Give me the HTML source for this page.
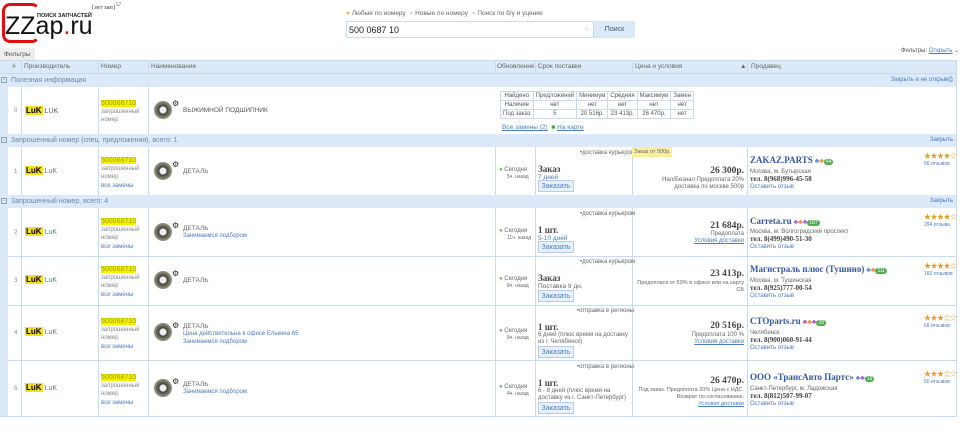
<!DOCTYPE html>
<html><head><meta charset="utf-8"><style>
*{margin:0;padding:0;box-sizing:border-box}
body{width:960px;height:442px;background:#fff;font-family:"Liberation Sans","Noto Sans CJK SC",sans-serif;color:#666;position:relative;overflow:hidden;font-size:7px}
.a{position:absolute;white-space:nowrap}
.hd{background:#dbe9f8;border-top:1px solid #c5d8ee;border-bottom:1px solid #c5d8ee}
.sec{background:#dbe9f8;color:#6a88aa;font-size:7px;padding:3px 0 0 11px}
.vl{position:absolute;width:1px;background:#c9dbef}
.hl{position:absolute;height:1px;background:#c9dbef;left:8px;width:949px}
.luk{display:inline-block;background:#f0e020;color:#000;font-weight:bold;font-size:8px;padding:0 1px;margin-right:2px}
.num{background:#f5f000;color:#a0a000;font-size:7px}
.lnk{color:#4a7cc0}
.btn{position:absolute;border:1px solid #b5cde8;background:#e8f1fb;color:#4a7cc0;font-size:7px;width:36px;height:12px;text-align:center;line-height:11px}
.pr{font-family:"Liberation Serif",serif;font-weight:bold;font-size:9.5px;color:#444}
.sn{font-family:"Liberation Serif",serif;font-weight:bold;font-size:9px;color:#3558a0}
.tel{font-family:"Liberation Serif",serif;font-weight:bold;font-size:7px;color:#444}
.st{color:#e0a020;font-size:7px;letter-spacing:-0.5px}
.ic{position:absolute;width:18px;height:18px;border-radius:50%;background:radial-gradient(circle,#eee 3px,#444 4px,#665 6px,#998 9px)}
.small{font-size:6px;color:#888}
</style></head><body>
<!-- logo -->
<div class="a" style="left:2px;top:3px;width:38px;height:40px;border:3px solid #e01010;border-radius:8px;border-right-color:transparent"></div>
<div class="a" style="left:5px;top:12px;font-size:25px;color:#111;font-family:'Liberation Sans',sans-serif">ZZap<span style="color:#e01010">.</span>ru</div>
<div class="a" style="left:37px;top:13px;font-size:5.5px;font-weight:bold;color:#222">ПОИСК ЗАПЧАСТЕЙ</div>
<div class="a" style="left:91px;top:3px;font-size:6.5px;color:#333;font-family:'Liberation Serif',serif">{зет зап}<sup style="font-size:5px">57</sup></div>
<!-- search -->
<div class="a" style="left:346px;top:10px;font-size:6.5px;color:#666"><span style="color:#e8b030">●</span> Любые по номеру &nbsp;<span style="color:#c8daf0">●</span> Новые по номеру &nbsp;<span style="color:#c8daf0">●</span> Поиск по б/у и уценке</div>
<div class="a" style="left:346px;top:21px;width:248px;height:17px;border:1px solid #c8daf0;font-size:9px;color:#222;padding:3px 0 0 2px">500 0687 10<span style="position:absolute;right:4px;top:4px;color:#9bd;font-size:7px">○</span></div>
<div class="a" style="left:594px;top:21px;width:41px;height:17px;background:#dbe9f8;font-size:7px;color:#456;text-align:center;line-height:17px">Поиск</div>
<div class="a" style="left:0;top:48px;width:35px;height:12px;background:#eee;font-size:6.5px;color:#555;padding:3px 0 0 4px">Фильтры</div>
<div class="a" style="left:901px;top:47px;font-size:6px;color:#555">Фильтры: <span class="lnk" style="text-decoration:underline">Открыть</span> ⌄</div>
<!-- table frame -->
<div class="a" style="left:0;top:60px;width:8px;height:356px;background:#dbe9f8"></div>
<div class="a hd" style="left:0;top:60px;width:957px;height:14px"></div>
<div class="a" style="left:8px;top:63px;font-size:6.5px;color:#666;width:949px">
<span class="a" style="left:4px">#</span><span class="a" style="left:16px">Производитель</span><span class="a" style="left:93px">Номер</span><span class="a" style="left:143px">Наименование</span><span class="a" style="left:489px">Обновление</span><span class="a" style="left:530px">Срок поставки</span><span class="a" style="left:627px">Цена и условия</span><span class="a" style="left:732px">▲</span><span class="a" style="left:743px">Продавец</span></div>
<div class="a sec" style="left:0;top:74px;width:957px;height:13px">Полезная информация<span class="a" style="right:4px;top:3px;color:#4a7cc0;font-size:6px">Закрыть и не открыв⎙</span></div>
<div class="a sec" style="left:0;top:134px;width:957px;height:13px">Запрошенный номер (спец. предложения), всего: 1<span class="a" style="right:4px;top:3px;color:#4a7cc0;font-size:6px">Закрыть</span></div>
<div class="a sec" style="left:0;top:195px;width:957px;height:13px">Запрошенный номер, всего: 4<span class="a" style="right:4px;top:3px;color:#4a7cc0;font-size:6px">Закрыть</span></div>
<div class="a" style="left:1px;top:77px;width:6px;height:6px;border:1px solid #8aa;font-size:5px;line-height:4px;text-align:center">-</div>
<div class="a" style="left:1px;top:137px;width:6px;height:6px;border:1px solid #8aa;font-size:5px;line-height:4px;text-align:center">-</div>
<div class="a" style="left:1px;top:198px;width:6px;height:6px;border:1px solid #8aa;font-size:5px;line-height:4px;text-align:center">-</div>
<!-- vertical lines -->
<div class="vl" style="left:21px;top:60px;height:14px"></div><div class="vl" style="left:98px;top:60px;height:14px"></div><div class="vl" style="left:148px;top:60px;height:14px"></div><div class="vl" style="left:495px;top:60px;height:14px"></div><div class="vl" style="left:535px;top:60px;height:14px"></div><div class="vl" style="left:632px;top:60px;height:14px"></div><div class="vl" style="left:747px;top:60px;height:14px"></div><div class="vl" style="left:956px;top:60px;height:356px"></div>
<div class="vl" style="left:21px;top:87px;height:47px"></div><div class="vl" style="left:98px;top:87px;height:47px"></div><div class="vl" style="left:148px;top:87px;height:47px"></div>
<div class="vl" style="left:21px;top:147px;height:48px"></div><div class="vl" style="left:98px;top:147px;height:48px"></div><div class="vl" style="left:148px;top:147px;height:48px"></div><div class="vl" style="left:495px;top:147px;height:48px"></div><div class="vl" style="left:535px;top:147px;height:48px"></div><div class="vl" style="left:632px;top:147px;height:48px"></div><div class="vl" style="left:747px;top:147px;height:48px"></div>
<div class="vl" style="left:21px;top:208px;height:208px"></div><div class="vl" style="left:98px;top:208px;height:208px"></div><div class="vl" style="left:148px;top:208px;height:208px"></div><div class="vl" style="left:495px;top:208px;height:208px"></div><div class="vl" style="left:535px;top:208px;height:208px"></div><div class="vl" style="left:632px;top:208px;height:208px"></div><div class="vl" style="left:747px;top:208px;height:208px"></div>
<div class="hl" style="top:256px"></div><div class="hl" style="top:305px"></div><div class="hl" style="top:360px"></div><div class="hl" style="top:416px;left:0;width:957px"></div>
<!-- row 0 -->
<div class="a small" style="left:14px;top:108px">0</div>
<div class="a" style="left:25px;top:106px"><span class="luk">LuK</span><span style="color:#556">LUK</span></div>
<div class="a" style="left:101px;top:100px;line-height:8px"><span class="num">500068710</span><br><span class="small">запрошенный<br>номер</span></div>
<div class="ic" style="left:154px;top:101px"></div><div class="a" style="left:172px;top:99px;font-size:8px;color:#222">⚙</div>
<div class="a" style="left:183px;top:107px;font-size:6.5px;color:#555">ВЫЖИМНОЙ ПОДШИПНИК</div>
<table class="a" style="left:500px;top:91px;border-collapse:collapse;font-size:6px;color:#555;text-align:center">
<tr><td style="border:1px solid #c9dbef;padding:1px 2px">Найдено</td><td style="border:1px solid #c9dbef;padding:1px 2px">Предложений</td><td style="border:1px solid #c9dbef;padding:1px 2px">Минимум</td><td style="border:1px solid #c9dbef;padding:1px 2px">Средняя</td><td style="border:1px solid #c9dbef;padding:1px 2px">Максимум</td><td style="border:1px solid #c9dbef;padding:1px 2px">Замен</td></tr>
<tr><td style="border:1px solid #c9dbef;padding:1px 2px">Наличие</td><td style="border:1px solid #c9dbef">нет</td><td style="border:1px solid #c9dbef">нет</td><td style="border:1px solid #c9dbef">нет</td><td style="border:1px solid #c9dbef">нет</td><td style="border:1px solid #c9dbef">нет</td></tr>
<tr><td style="border:1px solid #c9dbef;padding:1px 2px">Под заказ</td><td style="border:1px solid #c9dbef">5</td><td style="border:1px solid #c9dbef">20 516р.</td><td style="border:1px solid #c9dbef">23 413р.</td><td style="border:1px solid #c9dbef">26 470р.</td><td style="border:1px solid #c9dbef">нет</td></tr></table>
<div class="a" style="left:502px;top:124px;font-size:6.5px" ><span class="lnk" style="text-decoration:underline">Все замены (2)</span> &nbsp;<span style="color:#3a3">■</span> <span class="lnk" style="text-decoration:underline">На карте</span></div>

<!-- row1 147-195 -->
<div class="a small" style="left:14px;top:169px">1</div>
<div class="a" style="left:25px;top:166px"><span class="luk">LuK</span><span class="lnk">LuK</span></div>
<div class="a" style="left:101px;top:157px;line-height:7.5px"><span class="num">500068710</span><br><span class="small">запрошенный<br>номер</span><br><span class="lnk" style="font-size:6px">все замены</span></div>
<div class="ic" style="left:154px;top:162px"></div><div class="a" style="left:172px;top:160px;font-size:8px;color:#222">⚙</div>
<div class="a" style="left:183px;top:168px;font-size:6.5px">ДЕТАЛЬ</div>
<div class="a" style="left:499px;top:167px;font-size:6px;line-height:7px"><span style="color:#6b6">●</span> Сегодня<br><span style="font-size:5px;margin-left:8px">5ч. назад</span></div>
<div class="a" style="left:580px;top:150px;font-size:6px">•доставка курьером</div>
<div class="a" style="left:538px;top:164px;font-family:'Liberation Serif',serif;font-weight:bold;font-size:9px;color:#444">Заказ</div>
<div class="a lnk" style="left:538px;top:174px;font-size:6.5px">7 дней</div>
<div class="btn" style="left:538px;top:180px">Заказать</div>
<div class="a" style="left:632px;top:147px;width:40px;height:10px;background:#f7f0a0;font-size:5.5px;padding:2px 0 0 2px;color:#666">Заказ от 500р.</div>
<div class="a pr" style="right:216px;top:166px">26 300р.</div>
<div class="a" style="right:216px;top:177px;font-size:6px;text-align:right;line-height:7px">Нал/Безнал Предоплата 20%<br>доставка по москве 500р</div>
<div class="a" style="left:750px;top:155px"><span class="sn">ZAKAZ.PARTS</span> <span style="color:#58c">♣</span><span style="color:#e83">♣</span><span style="background:#5a5;color:#fff;border-radius:4px;font-size:5px;padding:0 2px">44</span></div>
<div class="a" style="left:750px;top:169px;font-size:6px;line-height:7px">Москва, м. Бутырская<br><span class="tel">тел. 8(968)996-45-58</span><br><span class="lnk">Оставить отзыв</span></div>
<div class="a" style="left:924px;top:153px;line-height:7px"><span class="st">★★★★☆</span><br><span class="lnk" style="font-size:5px">66 отзывов</span></div>

<!-- row2 208-256 -->
<div class="a small" style="left:14px;top:230px">2</div>
<div class="a" style="left:25px;top:227px"><span class="luk">LuK</span><span class="lnk">LuK</span></div>
<div class="a" style="left:101px;top:218px;line-height:7.5px"><span class="num">500068710</span><br><span class="small">запрошенный<br>номер</span><br><span class="lnk" style="font-size:6px">все замены</span></div>
<div class="ic" style="left:154px;top:223px"></div><div class="a" style="left:172px;top:221px;font-size:8px;color:#222">⚙</div>
<div class="a" style="left:183px;top:225px;font-size:6.5px;line-height:7px">ДЕТАЛЬ<br><span class="lnk" style="font-size:6px">Занимаемся подбором</span></div>
<div class="a" style="left:499px;top:228px;font-size:6px;line-height:7px"><span style="color:#6b6">●</span> Сегодня<br><span style="font-size:5px;margin-left:8px">11ч. назад</span></div>
<div class="a" style="left:580px;top:211px;font-size:6px">•доставка курьером</div>
<div class="a" style="left:538px;top:225px;font-family:'Liberation Serif',serif;font-weight:bold;font-size:9px;color:#444">1 шт.</div>
<div class="a lnk" style="left:538px;top:235px;font-size:6.5px">5-10 дней</div>
<div class="btn" style="left:538px;top:241px">Заказать</div>
<div class="a pr" style="right:216px;top:221px">21 684р.</div>
<div class="a" style="right:216px;top:231px;font-size:6px;text-align:right;line-height:7px">Предоплата<br><span class="lnk" style="text-decoration:underline">Условия доставки</span></div>
<div class="a" style="left:750px;top:216px"><span class="sn">Carreta.ru</span> <span style="color:#a5c">♣</span><span style="color:#e83">♣</span><span style="color:#a5c">♣</span><span style="background:#5a5;color:#fff;border-radius:4px;font-size:5px;padding:0 2px">187</span></div>
<div class="a" style="left:750px;top:229px;font-size:6px;line-height:7px">Москва, м. Волгоградский проспект<br><span class="tel">тел. 8(499)490-51-30</span><br><span class="lnk">Оставить отзыв</span></div>
<div class="a" style="left:924px;top:214px;line-height:7px"><span class="st">★★★★☆</span><br><span class="lnk" style="font-size:5px">294 отзыва</span></div>

<!-- row3 256-305 -->
<div class="a small" style="left:14px;top:278px">3</div>
<div class="a" style="left:25px;top:275px"><span class="luk">LuK</span><span class="lnk">LuK</span></div>
<div class="a" style="left:101px;top:266px;line-height:7.5px"><span class="num">500068710</span><br><span class="small">запрошенный<br>номер</span><br><span class="lnk" style="font-size:6px">все замены</span></div>
<div class="ic" style="left:154px;top:271px"></div><div class="a" style="left:172px;top:269px;font-size:8px;color:#222">⚙</div>
<div class="a" style="left:183px;top:277px;font-size:6.5px">ДЕТАЛЬ</div>
<div class="a" style="left:499px;top:276px;font-size:6px;line-height:7px"><span style="color:#6b6">●</span> Сегодня<br><span style="font-size:5px;margin-left:8px">8ч. назад</span></div>
<div class="a" style="left:580px;top:259px;font-size:6px">•доставка курьером</div>
<div class="a" style="left:538px;top:273px;font-family:'Liberation Serif',serif;font-weight:bold;font-size:9px;color:#444">Заказ</div>
<div class="a" style="left:538px;top:283px;font-size:6.5px">Поставка 9 дн.</div>
<div class="btn" style="left:538px;top:290px">Заказать</div>
<div class="a pr" style="right:216px;top:269px">23 413р.</div>
<div class="a" style="right:216px;top:280px;font-size:5.5px;text-align:right;line-height:7px">Предоплата от 50% в офисе или на карту<br>СБ</div>
<div class="a" style="left:750px;top:264px"><span class="sn">Магистраль плюс (Тушино)</span> <span style="color:#58c">♣</span><span style="color:#e83">♣</span><span style="background:#5a5;color:#fff;border-radius:4px;font-size:5px;padding:0 2px">111</span></div>
<div class="a" style="left:750px;top:278px;font-size:6px;line-height:7px">Москва, м. Тушинская<br><span class="tel">тел. 8(925)777-00-54</span><br><span class="lnk">Оставить отзыв</span></div>
<div class="a" style="left:924px;top:263px;line-height:7px"><span class="st">★★★★☆</span><br><span class="lnk" style="font-size:5px">160 отзывов</span></div>

<!-- row4 305-360 -->
<div class="a small" style="left:14px;top:330px">4</div>
<div class="a" style="left:25px;top:327px"><span class="luk">LuK</span><span class="lnk">LuK</span></div>
<div class="a" style="left:101px;top:318px;line-height:7.5px"><span class="num">500068710</span><br><span class="small">запрошенный<br>номер</span><br><span class="lnk" style="font-size:6px">все замены</span></div>
<div class="ic" style="left:154px;top:323px"></div><div class="a" style="left:172px;top:321px;font-size:8px;color:#222">⚙</div>
<div class="a" style="left:183px;top:323px;font-size:6.5px;line-height:7px">ДЕТАЛЬ<br><span class="lnk" style="font-size:6px">Цена действительна в офисе Елькина 65<br>Занимаемся подбором</span></div>
<div class="a" style="left:499px;top:328px;font-size:6px;line-height:7px"><span style="color:#6b6">●</span> Сегодня<br><span style="font-size:5px;margin-left:8px">8ч. назад</span></div>
<div class="a" style="left:577px;top:308px;font-size:6px">•отправка в регионы</div>
<div class="a" style="left:538px;top:322px;font-family:'Liberation Serif',serif;font-weight:bold;font-size:9px;color:#444">1 шт.</div>
<div class="a" style="left:538px;top:332px;font-size:6px;line-height:7px">6 дней (плюс время на доставку<br>из г. Челябинск)</div>
<div class="btn" style="left:538px;top:346px">Заказать</div>
<div class="a pr" style="right:216px;top:321px">20 516р.</div>
<div class="a" style="right:216px;top:332px;font-size:6px;text-align:right;line-height:7px">Предоплата 100 %<br><span class="lnk" style="text-decoration:underline">Условия доставки</span></div>
<div class="a" style="left:750px;top:316px"><span class="sn">СТОparts.ru</span> <span style="color:#a5c">♣</span><span style="color:#e83">♣</span><span style="color:#a5c">♣</span><span style="background:#5a5;color:#fff;border-radius:4px;font-size:5px;padding:0 2px">28</span></div>
<div class="a" style="left:750px;top:330px;font-size:6px;line-height:7px">Челябинск<br><span class="tel">тел. 8(900)060-91-44</span><br><span class="lnk">Оставить отзыв</span></div>
<div class="a" style="left:924px;top:315px;line-height:7px"><span class="st">★★★☆☆</span><br><span class="lnk" style="font-size:5px">66 отзывов</span></div>

<!-- row5 360-416 -->
<div class="a small" style="left:14px;top:386px">5</div>
<div class="a" style="left:25px;top:383px"><span class="luk">LuK</span><span class="lnk">LuK</span></div>
<div class="a" style="left:101px;top:374px;line-height:7.5px"><span class="num">500068710</span><br><span class="small">запрошенный<br>номер</span><br><span class="lnk" style="font-size:6px">все замены</span></div>
<div class="ic" style="left:154px;top:379px"></div><div class="a" style="left:172px;top:377px;font-size:8px;color:#222">⚙</div>
<div class="a" style="left:183px;top:381px;font-size:6.5px;line-height:7px">ДЕТАЛЬ<br><span class="lnk" style="font-size:6px">Занимаемся подбором</span></div>
<div class="a" style="left:499px;top:384px;font-size:6px;line-height:7px"><span style="color:#6b6">●</span> Сегодня<br><span style="font-size:5px;margin-left:8px">4ч. назад</span></div>
<div class="a" style="left:577px;top:364px;font-size:6px">•отправка в регионы</div>
<div class="a" style="left:538px;top:378px;font-family:'Liberation Serif',serif;font-weight:bold;font-size:9px;color:#444">1 шт.</div>
<div class="a" style="left:538px;top:388px;font-size:6px;line-height:7px">6 - 8 дней (плюс время на<br>доставку из г. Санкт-Петербург)</div>
<div class="btn" style="left:538px;top:402px">Заказать</div>
<div class="a pr" style="right:216px;top:376px">26 470р.</div>
<div class="a" style="right:216px;top:387px;font-size:5.5px;text-align:right;line-height:7px">Под заказ. Предоплата 20% Цена с НДС.<br>Возврат по согласованию.<br><span class="lnk" style="text-decoration:underline">Условия доставки</span></div>
<div class="a" style="left:750px;top:372px"><span class="sn">ООО «ТрансАвто Партс»</span> <span style="color:#58c">♣</span><span style="color:#a5c">♣</span><span style="background:#5a5;color:#fff;border-radius:4px;font-size:5px;padding:0 2px">19</span></div>
<div class="a" style="left:750px;top:386px;font-size:6px;line-height:7px">Санкт-Петербург, м. Ладожская<br><span class="tel">тел. 8(812)507-99-07</span><br><span class="lnk">Оставить отзыв</span></div>
<div class="a" style="left:924px;top:371px;line-height:7px"><span class="st">★★★☆☆</span><br><span class="lnk" style="font-size:5px">50 отзывов</span></div>
</body></html>
